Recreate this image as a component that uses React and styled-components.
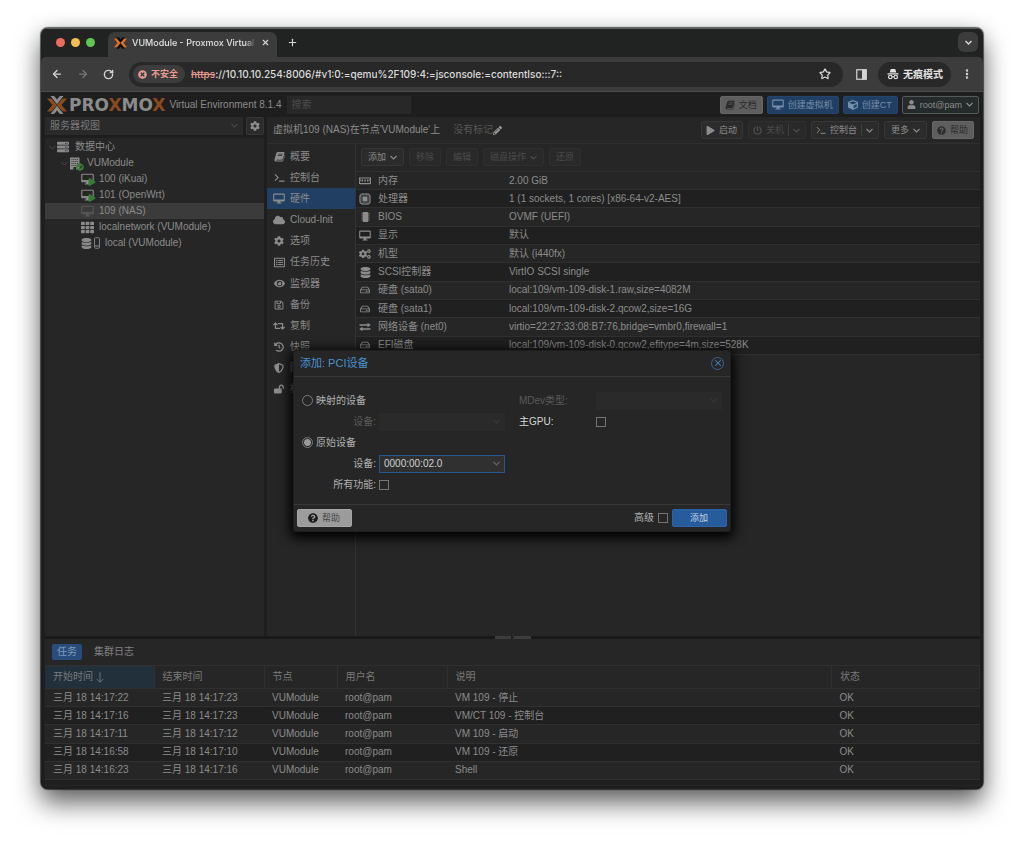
import React, { useState } from 'react';
import styled, { createGlobalStyle } from 'styled-components';
import {
  FaCube, FaUser, FaPlay, FaPowerOff, FaQuestionCircle, FaCog, FaCogs, FaServer,
  FaCheckCircle, FaTh, FaDatabase, FaCloud, FaRegListAlt, FaEye, FaRegSave, FaRetweet,
  FaHistory, FaShieldAlt, FaLockOpen, FaRegHdd, FaPencilAlt, FaTimesCircle,
} from 'react-icons/fa';
import { ArrowLeft, ArrowRight, RotateCw, Star, Plus, X, EllipsisVertical } from 'lucide-react';

const GlobalStyle = createGlobalStyle`
  *, *::before, *::after { box-sizing: border-box; }
  body {
    margin: 0;
    background: #fff;
    font-family: 'Liberation Sans', 'Noto Sans CJK SC', sans-serif;
    font-size: 10px;
    line-height: 14px;
    color: #8c8c8c;
  }
  button, input, select { font: inherit; color: inherit; margin: 0; }
  svg { flex: none; display: block; }
`;

/* ---------- icons ---------- */

const Svg = ({ w = 12, h = 12, box = '0 0 24 24', children }) => (
  <svg width={w} height={h} viewBox={box} fill="none" aria-hidden="true">{children}</svg>
);

const Chevron = ({ size = 7, weight = 2.2 }) => (
  <Svg w={size} h={size} box="0 0 14 14">
    <path d="M1 4l6 6 6-6" stroke="currentColor" strokeWidth={weight} />
  </Svg>
);

const Book = ({ size = 11 }) => (
  <Svg w={size} h={size} box="0 0 24 24">
    <path
      fill="currentColor"
      fillRule="evenodd"
      d="M8.500 2H21c1.500 0 2.300 1 1.900 2.400L19.500 17c-.4 1.400-1.400 2-2.800 2H5.500c-1.200 0-1.200 1.800 0 1.800h12.800c.8 0 1.500-.6 1.800-1.500L23.400 8c.6.700.7 1.500.4 2.400l-3 9.800c-.5 1.700-1.800 2.800-3.600 2.800H4.600C2 23 .4 20.600 1.200 18.200L5.400 4.400C5.900 2.800 7 2 8.500 2zM9.500 6l-.4 1.500h9.200l.4-1.500zM8.500 9.500L8 11h9.200l.5-1.500z"
    />
  </Svg>
);

const Desktop = ({ size = 13 }) => (
  <Svg w={size} h={size - 1} box="0 0 26 24">
    <rect x="1.500" y="2.500" width="23" height="15" rx="1.500" stroke="currentColor" strokeWidth="2.400" />
    <path d="M2 14h22v3.500H2z M10 17h6v4h2.500v2h-11v-2H10z" fill="currentColor" />
  </Svg>
);

const Terminal = ({ size = 11 }) => (
  <Svg w={size} h={size}>
    <path d="M2 5l7 7-7 7" stroke="currentColor" strokeWidth="2.400" />
    <path d="M11 20h12" stroke="currentColor" strokeWidth="2.400" />
  </Svg>
);

const Memory = () => (
  <Svg w={12} h={8} box="0 0 24 16">
    <path d="M1 2h22v3a1.500 1.500 0 000 3v5H1V8a1.500 1.500 0 000-3z" stroke="currentColor" strokeWidth="2.400" />
    <path d="M5 5h3v4H5zM10.500 5h3v4h-3zM16 5h3v4h-3z" fill="currentColor" />
    <path d="M4 13v2M8 13v2M12 13v2M16 13v2M20 13v2" stroke="currentColor" strokeWidth="2" />
  </Svg>
);

const Cpu = () => (
  <Svg>
    <rect x="2" y="2" width="20" height="20" rx="6" stroke="currentColor" strokeWidth="3" strokeOpacity="0.8" />
    <rect x="7" y="7" width="10" height="10" rx="1" fill="currentColor" />
    <rect x="5" y="5" width="14" height="14" rx="3" stroke="currentColor" strokeWidth="1.200" strokeOpacity="0.6" />
  </Svg>
);

const Chip = () => (
  <Svg w={11} h={12}>
    <rect x="6" y="1" width="12" height="22" rx="1.500" fill="currentColor" />
    <path d="M3 5h18M3 9.500h18M3 14h18M3 18.500h18" stroke="currentColor" strokeWidth="1.600" />
  </Svg>
);

const Exchange = () => (
  <Svg>
    <path d="M1 8h18M23 16H5" stroke="currentColor" strokeWidth="2.600" />
    <path d="M17 3.500L23.500 8 17 12.500zM7 11.500L.5 16 7 20.500z" fill="currentColor" />
  </Svg>
);

const Building = () => (
  <Svg w={12} h={13} box="0 0 24 26">
    <path d="M2 1h19v24h-7v-5H9v5H2z" fill="currentColor" />
    <path d="M5 5h13M5 9h13M5 13h13M5 17h13" stroke="#262626" strokeWidth="1.600" strokeDasharray="2 1.600" />
  </Svg>
);

const Drive = () => (
  <Svg w={6} h={12} box="0 0 12 24">
    <rect x="1" y="1.500" width="10" height="21" rx="2" stroke="currentColor" strokeWidth="1.800" />
    <path d="M2 18h8" stroke="currentColor" strokeWidth="2" />
  </Svg>
);

const SortArrow = () => (
  <Svg w={8} h={11} box="0 0 16 22">
    <path d="M8 1v19M1.500 14L8 20.500 14.500 14" stroke="currentColor" strokeWidth="1.800" />
  </Svg>
);

const Incognito = () => (
  <Svg w={12} h={12}>
    <path d="M7.500 2h9l2 7h-13zM1 10.500h22v2.500H1z" fill="currentColor" />
    <circle cx="6.500" cy="18" r="3.500" stroke="currentColor" strokeWidth="2.400" />
    <circle cx="17.500" cy="18" r="3.500" stroke="currentColor" strokeWidth="2.400" />
    <path d="M10 17.500h4" stroke="currentColor" strokeWidth="2" />
  </Svg>
);

const SidePanel = () => (
  <Svg w={11} h={11} box="0 0 22 22">
    <rect x="1.500" y="1.500" width="19" height="19" stroke="currentColor" strokeWidth="2.400" />
    <path d="M12 1h9v20h-9z" fill="currentColor" />
  </Svg>
);

const ProxmoxMark = ({ size, main, accent }) => (
  <Svg w={size} h={size - Math.round(size / 10)} box="0 0 40 36">
    <path d="M0 5h7c1.500 0 2.300.5 3.200 1.500L20 18l-9.800 11.500C9.300 30.500 8.500 31 7 31H0l11-13z" fill={accent} />
    <path d="M40 5h-7c-1.500 0-2.300.5-3.200 1.500L20 18l9.800 11.500c.9 1 1.700 1.500 3.200 1.500h7L29 18z" fill={accent} />
    <path d="M7 0h5c2 0 3 .6 4 1.800L20 7l4-5.200C25 .6 26 0 28 0h5L20 16.500z" fill={main} />
    <path d="M7 36h5c2 0 3-.6 4-1.800L20 29l4 5.200c1 1.200 2 1.800 4 1.800h5L20 19.500z" fill={main} />
  </Svg>
);

/* ---------- browser window ---------- */

const Page = styled.div`
  min-height: 100vh;
  padding: 28px 41px 54px;
  display: flex;
`;

const Window = styled.div`
  flex: 1;
  min-width: 0;
  display: flex;
  flex-direction: column;
  overflow: hidden;
  border-radius: 7px;
  background: #202322;
  box-shadow: 0 0 1px 1px rgba(0, 0, 0, 0.6), 0 14px 26px rgba(0, 0, 0, 0.6), 0 0 20px rgba(0, 0, 0, 0.12);
`;

const TabStrip = styled.div`
  height: 29px;
  padding: 3px 5px 0 15px;
  display: flex;
  border-top: 1px solid #5c5e5d;
`;

const Lights = styled.div`
  display: flex;
  gap: 6px;
  height: 21px;
  align-items: center;
  margin-right: 13px;
`;

const Light = styled.span`
  width: 9px;
  height: 9px;
  border-radius: 50%;
  background: ${props => props.$color};
`;

const BrowserTab = styled.div`
  width: 169px;
  height: 25px;
  padding: 0 7px 4px 6px;
  display: flex;
  align-items: center;
  gap: 5px;
  border-radius: 7px 7px 0 0;
  background: #3c3c3c;
  color: #e3e3e3;
  font: 500 9px/14px Inter, 'Noto Sans CJK SC', sans-serif;
`;

const TabTitle = styled.span`
  flex: 1;
  overflow: hidden;
  white-space: nowrap;
  mask-image: linear-gradient(90deg, #000 92%, transparent 100%);
`;

const PlainButton = styled.button`
  display: flex;
  align-items: center;
  justify-content: center;
  padding: 0;
  border: 0;
  background: none;
  color: ${props => props.$color || '#d6d6d6'};
`;

const NewTab = styled(PlainButton)`
  width: 30px;
  height: 21px;
`;

const TabSearch = styled(PlainButton)`
  width: 20px;
  height: 20px;
  margin-left: auto;
  border-radius: 6px;
  background: #3c3c3c;
`;

const Toolbar = styled.div`
  height: 34px;
  padding: 0 10px;
  display: flex;
  align-items: center;
  background: #3c3c3c;
  border-radius: 5px 5px 0 0;
`;

const NavButtons = styled.div`
  display: flex;
  gap: 14px;
  padding-right: 15px;
`;

const AddressBar = styled.div`
  flex: 1;
  min-width: 0;
  height: 25px;
  padding: 0 12px 0 4px;
  display: flex;
  align-items: center;
  gap: 6px;
  border-radius: 13px;
  background: #282828;
`;

const Insecure = styled.span`
  height: 18px;
  padding: 0 7px 0 5px;
  display: flex;
  align-items: center;
  gap: 4px;
  border-radius: 9px;
  background: #3c3c3c;
  color: #e69a92;
  font: 700 9px/14px 'Noto Sans CJK SC', sans-serif;
`;

const Url = styled.span`
  flex: 1;
  overflow: hidden;
  white-space: nowrap;
  color: #dcdcdc;
  font: 500 10px/14px Inter, sans-serif;

  s { color: #e69a92; }
`;

const PanelButton = styled(PlainButton)`
  padding: 0 11px 0 13px;
`;

const MenuButton = styled(PlainButton)`
  padding-left: 10px;
`;

const PrivateChip = styled.span`
  height: 25px;
  padding: 0 8px 0 9px;
  display: flex;
  align-items: center;
  gap: 4px;
  border-radius: 13px;
  background: #282828;
  color: #e3e3e3;
  font: 700 10px/14px 'Noto Sans CJK SC', sans-serif;
`;

/* ---------- app shell ---------- */

const Viewport = styled.div`
  position: relative;
  flex: 1;
  padding: 1px 3px 3px 4px;
  display: flex;
  flex-direction: column;
  background: #1e1e1e;
  border-top: 1px solid #4a4a4a;
`;

const Header = styled.header`
  height: 24px;
  padding: 0 1px 1px 2px;
  display: flex;
  align-items: center;
  gap: 4px;
`;

const WordMark = styled.span`
  margin-left: -2px;
  font: bold 17px/20px 'DejaVu Sans', sans-serif;
  color: #8b8b8b;

  span { color: #8a4b1f; }
`;

const Version = styled.span`
  margin-right: 1px;
  white-space: nowrap;
`;

const SearchBox = styled.input`
  width: 124px;
  height: 18px;
  padding: 0 5px;
  border: 0;
  background: #282828;

  &::placeholder { color: #4d4d4d; opacity: 1; }
`;

const Spacer = styled.span`
  flex: 1;
`;

const variants = {
  plain: ['#2b2b2b', '#363636', '#8c8c8c'],
  off: ['#292929', '#2f2f2f', '#4b4b4b'],
  light: ['#5e5e5e', '#666', '#2c2c2c'],
  blue: ['#213f63', '#24466e', '#7590ab'],
  user: ['#252a2a', '#555b59', '#8c8c8c'],
  bright: ['#9c9c9c', '#a6a6a6', '#444'],
  primary: ['#265c9c', '#2b64a8', '#c4d3e4'],
};

const Button = styled.button`
  height: 18px;
  min-width: ${props => props.$min || 0}px;
  padding: ${props => (props.$text ? '0 6px' : '0 5px 0 4px')};
  display: flex;
  align-items: center;
  justify-content: center;
  gap: 4px;
  border: 1px solid ${props => variants[props.$kind || 'plain'][1]};
  border-radius: 2px;
  background: ${props => variants[props.$kind || 'plain'][0]};
  color: ${props => variants[props.$kind || 'plain'][2]};
  font-size: 9px;
  white-space: nowrap;
`;

const Divider = styled.i`
  width: 1px;
  height: 12px;
  background: #3e3e3e;
`;

const Columns = styled.div`
  flex: 1;
  display: flex;
  gap: 3px;
`;

const TreeSide = styled.aside`
  width: 219px;
  display: flex;
  flex-direction: column;
  gap: 3px;
`;

const ViewBar = styled.div`
  display: flex;
  gap: 3px;
`;

const SelectWrap = styled.div`
  position: relative;
  flex: 1;

  svg {
    position: absolute;
    right: 5px;
    top: 5px;
    color: ${props => props.$arrow || '#484848'};
    pointer-events: none;
  }
`;

const Select = styled.select`
  width: 100%;
  height: 18px;
  padding: 0 4px;
  display: block;
  appearance: none;
  border: 1px solid ${props => (props.$focus ? '#24558c' : 'transparent')};
  border-radius: 0;
  background: ${props => (props.$focus ? '#303030' : '#2a2a2a')};
  color: ${props => (props.$focus ? '#d0d0d0' : '#7a7a7a')};
  opacity: 1;
`;

const GearButton = styled(Button)`
  width: 18px;
  padding: 0;
`;

const Tree = styled.ul`
  flex: 1;
  margin: 0;
  padding: 1px 0;
  list-style: none;
  background: #262626;
`;

const TreeRow = styled.li`
  height: 16px;
  padding-left: ${props => 4 + props.$depth * 12}px;
  display: flex;
  align-items: center;
  gap: 5px;
  white-space: nowrap;
  background: ${props => (props.$active ? '#3b3b3b' : 'none')};
`;

const Toggle = styled.span`
  width: 7px;
  margin-right: -4px;
  color: #505050;
`;

const NodeIcon = styled.span`
  position: relative;
  min-width: 13px;
  display: flex;
  align-items: center;
  gap: 2px;
  color: ${props => (props.$dim ? '#555' : '#8a8a8a')};
`;

const Badge = styled.span`
  position: absolute;
  right: -2px;
  bottom: -1px;
  color: #357a38;
`;

const Detail = styled.main`
  flex: 1;
  min-width: 0;
  display: flex;
  flex-direction: column;
  background: #262626;
`;

const TitleBar = styled.div`
  height: 27px;
  padding: 0 6px;
  display: flex;
  align-items: center;
  gap: 5px;
  border-bottom: 1px solid #303030;
  white-space: nowrap;
`;

const Tags = styled.span`
  margin-left: 8px;
  display: flex;
  align-items: center;
  color: #565656;

  svg { color: #999; }
`;

const DetailBody = styled.div`
  flex: 1;
  display: flex;
`;

const SideNav = styled.nav`
  width: 88px;
  height: 256px;
  padding-top: 2px;
  display: grid;
`;

const NavLink = styled.a`
  padding-left: 6px;
  display: flex;
  align-items: center;
  gap: 5px;
  color: inherit;
  text-decoration: none;
  white-space: nowrap;
  background: ${props => (props.$active ? '#213f63' : 'none')};
`;

const IconSlot = styled.span`
  width: 12px;
  display: flex;
  justify-content: center;
`;

const Content = styled.section`
  flex: 1;
  min-width: 0;
  border-left: 1px solid #333;
`;

const ActionBar = styled.div`
  height: 28px;
  padding: 0 6px 1px 5px;
  display: flex;
  align-items: center;
  gap: 5px;
  border-bottom: 1px solid #303030;
`;

const Grid = styled.table`
  width: 100%;
  height: ${props => props.$height}px;
  border-collapse: collapse;
  table-layout: fixed;
  white-space: nowrap;

  th, td {
    padding: 0 0 0 ${props => props.$pad}px;
    border-bottom: 1px solid #303030;
    text-align: left;
    font-weight: normal;
    overflow: hidden;
  }
  tbody tr:nth-child(even) { background: #202020; }
`;

const Labelled = styled.span`
  display: flex;
  align-items: center;
  gap: 7px;
`;

/* ---------- log panel ---------- */

const Splitter = styled.div`
  height: 3px;
  display: flex;
  justify-content: center;
  background: #191919;
`;

const Collapse = styled(PlainButton)`
  width: 36px;
  background: #3c3c3c;
  color: #161616;
`;

const LogPanel = styled.section`
  background: #262626;
`;

const LogTabs = styled.div`
  padding: 5px 7px;
  display: flex;
  gap: 7px;
`;

const LogTab = styled.button`
  height: 16px;
  padding: 0 5px;
  border: 0;
  border-radius: 2px;
  background: ${props => (props.$active ? '#284c7c' : 'none')};
  color: ${props => (props.$active ? '#7f9bb9' : '#808080')};
`;

const HeadCell = styled.th`
  height: 23px;
  border: 1px solid #303030;
  border-left: 0;
  color: #7a7a7a;
  background: ${props => (props.$sorted ? '#22303c' : 'none')};
`;

const SortLabel = styled.span`
  display: flex;
  align-items: center;
  gap: 3px;
`;

const Grip = styled.div`
  height: 6px;
  background: #1f1f1f;
  border-bottom: 1px solid #262626;
`;

/* ---------- dialog ---------- */

const Overlay = styled.div`
  position: absolute;
  inset: 0;
  display: flex;
  align-items: center;
  justify-content: center;
`;

const Dialog = styled.div`
  width: 438px;
  border: 1px solid #1e1e1e;
  border-radius: 3px;
  background: #262626;
  color: #b2b2b2;
  box-shadow: 0 3px 12px 3px #000;
`;

const DialogHead = styled.div`
  height: 25px;
  padding: 0 6px;
  display: flex;
  align-items: center;
  justify-content: space-between;
  color: #4a90d0;
  font-size: 11px;
`;

const CloseButton = styled(PlainButton)`
  width: 13px;
  height: 13px;
  border: 1px solid #35658d;
  border-radius: 50%;
  color: #4484b8;
`;

const DialogForm = styled.form`
  padding: 15px 8px 10px;
  display: grid;
  grid-template-columns: 1fr 1fr;
  gap: 14px;
  border: 1px solid #383838;
  border-width: 1px 0;
`;

const FormColumn = styled.div`
  display: flex;
  flex-direction: column;
  gap: 3px;
`;

const Field = styled.div`
  height: 18px;
  display: flex;
  align-items: center;
  gap: 3px;
  color: ${props => (props.$off ? '#5a5a5a' : props.$strong ? '#d6d6d6' : '#b2b2b2')};
`;

const FieldLabel = styled.label`
  width: 74px;
  text-align: ${props => (props.$left ? 'left' : 'right')};
`;

const Radio = styled.input`
  appearance: none;
  width: 11px;
  height: 11px;
  border: 1px solid #7c7c7c;
  border-radius: 50%;

  &:checked {
    background: radial-gradient(circle, #9a9a9a 3px, transparent 4px);
  }
`;

const Check = styled.input`
  appearance: none;
  width: 10px;
  height: 10px;
  border: 1px solid #757575;

  &:checked { background: #9a9a9a; }
`;

const DialogFoot = styled.div`
  padding: 4px 3px;
  display: flex;
  align-items: center;
  justify-content: space-between;
`;

const FootRight = styled.div`
  display: flex;
  align-items: center;
  gap: 4px;
`;

/* ---------- data ---------- */

const tree = [
  { depth: 0, icon: <FaServer size={12} />, text: '数据中心', open: true },
  { depth: 1, icon: <Building />, text: 'VUModule', open: true, badge: <FaCheckCircle size={8} /> },
  { depth: 2, icon: <Desktop />, text: '100 (iKuai)', badge: <FaPlay size={8} /> },
  { depth: 2, icon: <Desktop />, text: '101 (OpenWrt)', badge: <FaPlay size={8} /> },
  { depth: 2, icon: <Desktop />, text: '109 (NAS)', dim: true, active: true },
  { depth: 2, icon: <FaTh size={13} />, text: 'localnetwork (VUModule)' },
  { depth: 2, icon: <><FaDatabase size={11} /><Drive /></>, text: 'local (VUModule)' },
];

const navItems = [
  [<Book />, '概要'],
  [<Terminal />, '控制台'],
  [<Desktop size={12} />, '硬件'],
  [<FaCloud size={12} />, 'Cloud-Init'],
  [<FaCog />, '选项'],
  [<FaRegListAlt size={11} />, '任务历史'],
  [<FaEye size={11} />, '监视器'],
  [<FaRegSave />, '备份'],
  [<FaRetweet size={12} />, '复制'],
  [<FaHistory />, '快照'],
  [<FaShieldAlt />, '防火墙'],
  [<FaLockOpen />, '权限'],
];

const hardware = [
  [<Memory />, '内存', '2.00 GiB'],
  [<Cpu />, '处理器', '1 (1 sockets, 1 cores) [x86-64-v2-AES]'],
  [<Chip />, 'BIOS', 'OVMF (UEFI)'],
  [<Desktop size={12} />, '显示', '默认'],
  [<FaCogs size={12} />, '机型', '默认 (i440fx)'],
  [<FaDatabase size={11} />, 'SCSI控制器', 'VirtIO SCSI single'],
  [<FaRegHdd />, '硬盘 (sata0)', 'local:109/vm-109-disk-1.raw,size=4082M'],
  [<FaRegHdd />, '硬盘 (sata1)', 'local:109/vm-109-disk-2.qcow2,size=16G'],
  [<Exchange />, '网络设备 (net0)', 'virtio=22:27:33:08:B7:76,bridge=vmbr0,firewall=1'],
  [<FaRegHdd />, 'EFI磁盘', 'local:109/vm-109-disk-0.qcow2,efitype=4m,size=528K'],
];

const tasks = [
  ['三月 18 14:17:22', '三月 18 14:17:23', 'VM 109 - 停止'],
  ['三月 18 14:17:16', '三月 18 14:17:23', 'VM/CT 109 - 控制台'],
  ['三月 18 14:17:11', '三月 18 14:17:12', 'VM 109 - 启动'],
  ['三月 18 14:16:58', '三月 18 14:17:10', 'VM 109 - 还原'],
  ['三月 18 14:16:23', '三月 18 14:17:16', 'Shell'],
];

function Browser() {
  return (
    <>
      <TabStrip>
        <Lights>
          <Light $color="#ed6a5e" />
          <Light $color="#f5bf4f" />
          <Light $color="#61c554" />
        </Lights>
        <BrowserTab>
          <ProxmoxMark size={13} main="#0c0c0c" accent="#e57020" />
          <TabTitle>VUModule - Proxmox Virtual Environment</TabTitle>
          <PlainButton aria-label="Close tab"><X size={9} strokeWidth={3} /></PlainButton>
        </BrowserTab>
        <NewTab aria-label="New tab"><Plus size={11} strokeWidth={2.5} /></NewTab>
        <TabSearch aria-label="Search tabs"><Chevron weight={3} /></TabSearch>
      </TabStrip>
      <Toolbar>
        <NavButtons>
          <PlainButton aria-label="Back"><ArrowLeft size={12} strokeWidth={2.5} /></PlainButton>
          <PlainButton aria-label="Forward" $color="#777"><ArrowRight size={12} strokeWidth={2.5} /></PlainButton>
          <PlainButton aria-label="Reload"><RotateCw size={11} strokeWidth={3} /></PlainButton>
        </NavButtons>
        <AddressBar>
          <Insecure><FaTimesCircle size={9} />不安全</Insecure>
          <Url><s>https</s>://10.10.10.254:8006/#v1:0:=qemu%2F109:4:=jsconsole:=contentIso:::7::</Url>
          <PlainButton aria-label="Bookmark"><Star size={12} strokeWidth={2.5} /></PlainButton>
        </AddressBar>
        <PanelButton aria-label="Side panel"><SidePanel /></PanelButton>
        <PrivateChip><Incognito />无痕模式</PrivateChip>
        <MenuButton aria-label="Menu"><EllipsisVertical size={12} strokeWidth={3} /></MenuButton>
      </Toolbar>
    </>
  );
}

function PciDialog() {
  const [source, setSource] = useState('raw');

  return (
    <Overlay>
      <Dialog role="dialog" aria-labelledby="dlg-title">
        <DialogHead>
          <span id="dlg-title">添加: PCI设备</span>
          <CloseButton aria-label="Close"><X size={10} strokeWidth={2.5} /></CloseButton>
        </DialogHead>
        <DialogForm>
          <FormColumn>
            <Field>
              <Radio type="radio" name="source" id="mapped" checked={source === 'mapped'} onChange={() => setSource('mapped')} />
              <label htmlFor="mapped">映射的设备</label>
            </Field>
            <Field $off>
              <FieldLabel htmlFor="mapped-device">设备:</FieldLabel>
              <SelectWrap $arrow="#383838">
                <Select id="mapped-device" disabled />
                <Chevron />
              </SelectWrap>
            </Field>
            <Field>
              <Radio type="radio" name="source" id="raw" checked={source === 'raw'} onChange={() => setSource('raw')} />
              <label htmlFor="raw">原始设备</label>
            </Field>
            <Field>
              <FieldLabel htmlFor="raw-device">设备:</FieldLabel>
              <SelectWrap $arrow="#666">
                <Select id="raw-device" $focus><option>0000:00:02.0</option></Select>
                <Chevron />
              </SelectWrap>
            </Field>
            <Field>
              <FieldLabel htmlFor="all-functions">所有功能:</FieldLabel>
              <Check type="checkbox" id="all-functions" />
            </Field>
          </FormColumn>
          <FormColumn>
            <Field $off>
              <FieldLabel htmlFor="mdev" $left>MDev类型:</FieldLabel>
              <SelectWrap $arrow="#383838">
                <Select id="mdev" disabled />
                <Chevron />
              </SelectWrap>
            </Field>
            <Field $strong>
              <FieldLabel htmlFor="primary-gpu" $left>主GPU:</FieldLabel>
              <Check type="checkbox" id="primary-gpu" />
            </Field>
          </FormColumn>
        </DialogForm>
        <DialogFoot>
          <Button $kind="bright" $min={55}><FaQuestionCircle size={10} color="#1c1c1c" />帮助</Button>
          <FootRight>
            <label htmlFor="advanced">高级</label>
            <Check type="checkbox" id="advanced" />
            <Button $kind="primary" $min={55}>添加</Button>
          </FootRight>
        </DialogFoot>
      </Dialog>
    </Overlay>
  );
}

function App() {
  return (
    <>
      <GlobalStyle />
      <Page>
        <Window>
          <Browser />
          <Viewport>
            <Header>
              <ProxmoxMark size={20} main="#8b8b8b" accent="#8a4b1f" />
              <WordMark>PRO<span>X</span>MO<span>X</span></WordMark>
              <Version>Virtual Environment 8.1.4</Version>
              <SearchBox placeholder="搜索" aria-label="搜索" />
              <Spacer />
              <Button $kind="light"><Book size={10} />文档</Button>
              <Button $kind="blue"><Desktop size={12} />创建虚拟机</Button>
              <Button $kind="blue"><FaCube size={10} />创建CT</Button>
              <Button $kind="user"><FaUser size={9} />root@pam<Chevron /></Button>
            </Header>
            <Columns>
              <TreeSide>
                <ViewBar>
                  <SelectWrap>
                    <Select aria-label="视图"><option>服务器视图</option></Select>
                    <Chevron />
                  </SelectWrap>
                  <GearButton aria-label="设置"><FaCog size={10} /></GearButton>
                </ViewBar>
                <Tree>
                  {tree.map((n) => (
                    <TreeRow key={n.text} $depth={n.depth} $active={n.active}>
                      <Toggle>{n.open && <Chevron weight={1.8} />}</Toggle>
                      <NodeIcon $dim={n.dim}>
                        {n.icon}
                        {n.badge && <Badge>{n.badge}</Badge>}
                      </NodeIcon>
                      {n.text}
                    </TreeRow>
                  ))}
                </Tree>
              </TreeSide>
              <Detail>
                <TitleBar>
                  <span>虚拟机109 (NAS)在节点'VUModule'上</span>
                  <Tags>没有标记<FaPencilAlt size={9} /></Tags>
                  <Spacer />
                  <Button><FaPlay size={9} />启动</Button>
                  <Button $kind="off"><FaPowerOff size={9} />关机<Divider /><Chevron /></Button>
                  <Button><Terminal size={10} />控制台<Divider /><Chevron /></Button>
                  <Button $text>更多<Chevron /></Button>
                  <Button $kind="light"><FaQuestionCircle size={9} />帮助</Button>
                </TitleBar>
                <DetailBody>
                  <SideNav>
                    {navItems.map(([icon, text]) => (
                      <NavLink key={text} href="#" $active={text === '硬件'}>
                        <IconSlot>{icon}</IconSlot>
                        {text}
                      </NavLink>
                    ))}
                  </SideNav>
                  <Content>
                    <ActionBar>
                      <Button $text>添加<Chevron /></Button>
                      <Button $text $kind="off">移除</Button>
                      <Button $text $kind="off">编辑</Button>
                      <Button $text $kind="off">磁盘操作<Chevron /></Button>
                      <Button $text $kind="off">还原</Button>
                    </ActionBar>
                    <Grid $height={183} $pad={3}>
                      <colgroup>
                        <col width="150" />
                        <col />
                      </colgroup>
                      <tbody>
                        {hardware.map(([icon, name, value]) => (
                          <tr key={name}>
                            <td><Labelled><IconSlot>{icon}</IconSlot>{name}</Labelled></td>
                            <td>{value}</td>
                          </tr>
                        ))}
                      </tbody>
                    </Grid>
                  </Content>
                </DetailBody>
              </Detail>
            </Columns>
            <Splitter><Collapse aria-label="Collapse"><FaPlay size={3} /></Collapse></Splitter>
            <LogPanel>
              <LogTabs>
                <LogTab $active>任务</LogTab>
                <LogTab>集群日志</LogTab>
              </LogTabs>
              <Grid $height={115} $pad={8}>
                <colgroup>
                  <col width="109" />
                  <col width="110" />
                  <col width="73" />
                  <col width="110" />
                  <col />
                  <col width="148" />
                </colgroup>
                <thead>
                  <tr>
                    <HeadCell $sorted><SortLabel>开始时间<SortArrow /></SortLabel></HeadCell>
                    <HeadCell>结束时间</HeadCell>
                    <HeadCell>节点</HeadCell>
                    <HeadCell>用户名</HeadCell>
                    <HeadCell>说明</HeadCell>
                    <HeadCell>状态</HeadCell>
                  </tr>
                </thead>
                <tbody>
                  {tasks.map(([start, end, text]) => (
                    <tr key={start}>
                      <td>{start}</td>
                      <td>{end}</td>
                      <td>VUModule</td>
                      <td>root@pam</td>
                      <td>{text}</td>
                      <td>OK</td>
                    </tr>
                  ))}
                </tbody>
              </Grid>
              <Grip />
            </LogPanel>
            <PciDialog />
          </Viewport>
        </Window>
      </Page>
    </>
  );
}

export default App;
